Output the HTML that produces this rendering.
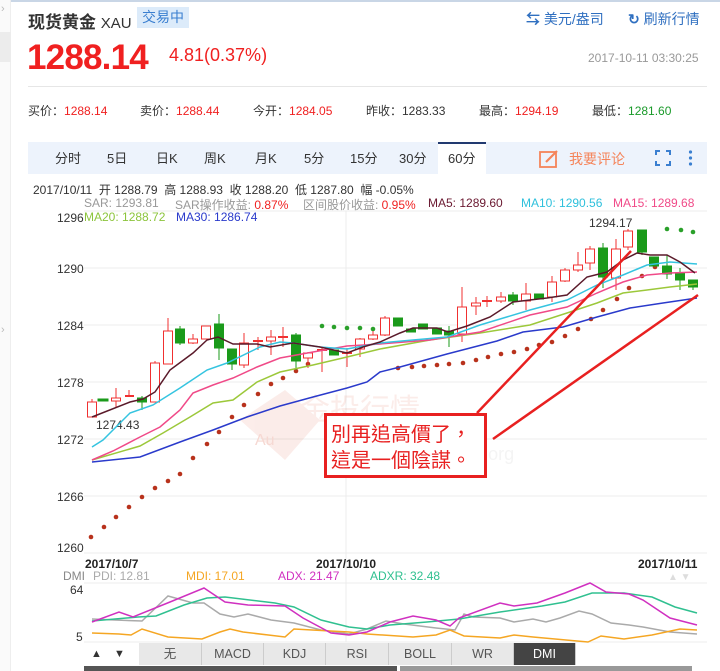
<!DOCTYPE html>
<html><head><meta charset="utf-8"><style>
*{margin:0;padding:0;box-sizing:border-box}
body{width:720px;height:671px;overflow:hidden;background:#fff;font-family:"Liberation Sans","Noto Sans CJK SC",sans-serif;position:relative;color:#333}
.a{position:absolute;white-space:nowrap}
.r{color:#f02020}.g{color:#1a9a2a}
.tab{position:absolute;top:142px;height:32px;line-height:34px;font-size:13px;color:#333}
.bt{position:absolute;top:643px;height:22px;line-height:22px;font-size:12.5px;color:#555;text-align:center;background:#e8e8e8;border-right:1px solid #ccc}
</style></head><body>
<div class="a" style="left:0;top:0;width:720px;height:2px;background:#c9d6e6"></div>
<div class="a" style="left:0;top:0;width:11px;height:671px;background:#fafafa;border-right:1px solid #eee"></div>
<div class="a" style="left:0;top:32px;width:11px;height:30px;background:#ececec"></div>
<div class="a" style="left:1px;top:3px;font-size:11px;color:#bbb">›</div>
<div class="a" style="left:1px;top:324px;font-size:11px;color:#bbb">›</div>

<div class="a" style="left:28px;top:8px;font-size:17px;font-weight:bold;color:#333">现货黄金 <span style="font-weight:normal;font-size:15px">XAU</span></div>
<div class="a" style="left:137px;top:7px;width:52px;height:21px;background:#dcebfa;color:#3a7fd0;font-size:14px;line-height:21px;text-align:center">交易中</div>
<div class="a" style="left:526px;top:9px;font-size:14px;color:#2f6fc0"><span style="font-weight:bold">⇆</span> 美元/盎司</div>
<div class="a" style="left:628px;top:9px;font-size:14px;color:#2f6fc0"><span style="font-weight:bold">↻</span> 刷新行情</div>
<div class="a r" style="left:27px;top:38px;font-size:35px;font-weight:bold;letter-spacing:-0.8px">1288.14</div>
<div class="a r" style="left:169px;top:45px;font-size:18px">4.81(0.37%)</div>
<div class="a" style="left:588px;top:51px;font-size:12px;color:#999">2017-10-11 03:30:25</div>
<div class="a" style="left:28px;top:86px;width:679px;height:1px;background:#e6e6e6"></div>
<div class="a" style="left:28px;top:102px;font-size:12px;color:#333">买价：<span class="r">1288.14</span></div>
<div class="a" style="left:140px;top:102px;font-size:12px;color:#333">卖价：<span class="r">1288.44</span></div>
<div class="a" style="left:253px;top:102px;font-size:12px;color:#333">今开：<span class="r">1284.05</span></div>
<div class="a" style="left:366px;top:102px;font-size:12px;color:#333">昨收：1283.33</div>
<div class="a" style="left:479px;top:102px;font-size:12px;color:#333">最高：<span class="r">1294.19</span></div>
<div class="a" style="left:592px;top:102px;font-size:12px;color:#333">最低：<span class="g">1281.60</span></div>

<div class="a" style="left:28px;top:142px;width:679px;height:32px;background:#edf3fc"></div>
<div class="a" style="left:438px;top:142px;width:48px;height:33px;background:#fff;border-top:2px solid #223a70"></div>
<div class="tab" style="left:55px">分时</div><div class="tab" style="left:107px">5日</div><div class="tab" style="left:156px">日K</div><div class="tab" style="left:204px">周K</div><div class="tab" style="left:255px">月K</div><div class="tab" style="left:304px">5分</div><div class="tab" style="left:350px">15分</div><div class="tab" style="left:399px">30分</div><div class="tab" style="left:448px">60分</div>
<svg class="a" style="left:539px;top:149px" width="22" height="20"><rect x="1" y="3" width="16" height="15" fill="none" stroke="#f5845a" stroke-width="1.8"/><path d="M7 13 L18 2" stroke="#f5845a" stroke-width="2.2"/></svg>
<div class="tab" style="left:569px;color:#f5845a;font-size:14px">我要评论</div>
<svg class="a" style="left:655px;top:150px" width="16" height="16" fill="none" stroke="#3a7fd0" stroke-width="2"><path d="M1 5V1H5M11 1H15V5M15 11V15H11M5 15H1V11"/></svg>
<svg class="a" style="left:688px;top:150px" width="5" height="16" fill="#3a7fd0"><circle cx="2.5" cy="2" r="1.6"/><circle cx="2.5" cy="8" r="1.6"/><circle cx="2.5" cy="14" r="1.6"/></svg>

<div class="a" style="left:33px;top:181px;font-size:12px;color:#333">2017/10/11&nbsp; 开 1288.79&nbsp; 高 1288.93&nbsp; 收 1288.20&nbsp; 低 1287.80&nbsp; 幅 -0.05%</div>
<div class="a" style="left:84px;top:196px;font-size:12px;color:#999">SAR: 1293.81</div>
<div class="a" style="left:175px;top:196px;font-size:12px;color:#999">SAR操作收益: <span class="r">0.87%</span></div>
<div class="a" style="left:303px;top:196px;font-size:12px;color:#999">区间股价收益: <span class="r">0.95%</span></div>
<div class="a" style="left:428px;top:196px;font-size:12px;color:#6a1830">MA5: 1289.60</div>
<div class="a" style="left:521px;top:196px;font-size:12px;color:#2ec0dc">MA10: 1290.56</div>
<div class="a" style="left:613px;top:196px;font-size:12px;color:#f04a88">MA15: 1289.68</div>

<svg class="a" style="left:0;top:0" width="720" height="671">
<g stroke="#ececec" stroke-width="1">
<line x1="84" y1="211" x2="707" y2="211"/><line x1="84" y1="268" x2="707" y2="268"/><line x1="84" y1="325" x2="707" y2="325"/><line x1="84" y1="382" x2="707" y2="382"/><line x1="84" y1="439" x2="707" y2="439"/><line x1="84" y1="496" x2="707" y2="496"/><line x1="84" y1="553" x2="707" y2="553"/>
<line x1="346" y1="211" x2="346" y2="642"/><line x1="84" y1="583" x2="707" y2="583"/><line x1="84" y1="642" x2="707" y2="642"/>
</g>
<g font-size="12" fill="#333" font-family="Liberation Sans,sans-serif">
<text x="57" y="222">1296</text><text x="57" y="273">1290</text><text x="57" y="330">1284</text><text x="57" y="387">1278</text><text x="57" y="444">1272</text><text x="57" y="501">1266</text><text x="57" y="552">1260</text>
<text x="96" y="429">1274.43</text><text x="589" y="227">1294.17</text>
</g>
<text x="84" y="221" font-size="12" fill="#8cc43c">MA20: 1288.72</text><text x="176" y="221" font-size="12" fill="#2a3acb">MA30: 1286.74</text>
<!-- watermark -->
<g opacity="0.1" fill="#e05030"><path d="M240 420 L285 390 L320 420 L285 460 Z"/><text x="300" y="420" font-size="30" font-family="Noto Sans CJK SC">金投行情</text><text x="380" y="460" font-size="18" fill="#999">quote.cngold.org</text></g>
<text x="255" y="445" font-size="16" fill="#f6d8d2">Au</text>
<!-- SAR dots -->
<g fill="#b8321c">
<circle cx="91" cy="537" r="2.3"/><circle cx="104" cy="527" r="2.3"/><circle cx="116" cy="517" r="2.3"/><circle cx="129" cy="507" r="2.3"/><circle cx="142" cy="497" r="2.3"/><circle cx="155" cy="488" r="2.3"/><circle cx="168" cy="481" r="2.3"/><circle cx="180" cy="474" r="2.3"/><circle cx="193" cy="458" r="2.3"/><circle cx="207" cy="444" r="2.3"/><circle cx="219" cy="432" r="2.3"/><circle cx="232" cy="417" r="2.3"/><circle cx="244" cy="405" r="2.3"/><circle cx="258" cy="394" r="2.3"/><circle cx="271" cy="384" r="2.3"/><circle cx="283" cy="378" r="2.3"/><circle cx="296" cy="371" r="2.3"/><circle cx="308" cy="364" r="2.3"/>
<circle cx="398" cy="368" r="2.3"/><circle cx="412" cy="367" r="2.3"/><circle cx="424" cy="366" r="2.3"/><circle cx="437" cy="365" r="2.3"/><circle cx="449" cy="364" r="2.3"/><circle cx="463" cy="363" r="2.3"/><circle cx="476" cy="360" r="2.3"/><circle cx="488" cy="357" r="2.3"/><circle cx="501" cy="354" r="2.3"/><circle cx="514" cy="352" r="2.3"/><circle cx="527" cy="349" r="2.3"/><circle cx="539" cy="345" r="2.3"/><circle cx="552" cy="342" r="2.3"/><circle cx="565" cy="336" r="2.3"/><circle cx="578" cy="329" r="2.3"/><circle cx="591" cy="319" r="2.3"/><circle cx="603" cy="310" r="2.3"/><circle cx="617" cy="299" r="2.3"/><circle cx="629" cy="288" r="2.3"/><circle cx="642" cy="276" r="2.3"/><circle cx="655" cy="267" r="2.3"/>
</g>
<g fill="#2aa02a"><circle cx="322" cy="326" r="2.3"/><circle cx="334" cy="327" r="2.3"/><circle cx="347" cy="328" r="2.3"/><circle cx="360" cy="328" r="2.3"/><circle cx="373" cy="329" r="2.3"/><circle cx="385" cy="330" r="2.3"/><circle cx="667" cy="229" r="2.3"/><circle cx="681" cy="230" r="2.3"/><circle cx="693" cy="232" r="2.3"/></g>
<!-- candles -->
<g stroke="#f03030" stroke-width="1" fill="#fff">
<line x1="92" y1="399" x2="92" y2="417"/><rect x="87.5" y="402" width="9" height="15"/>
<line x1="116" y1="388" x2="116" y2="408"/><rect x="111.5" y="398" width="9" height="3"/>
<line x1="129" y1="390" x2="129" y2="397"/><line x1="125" y1="396" x2="134" y2="396" stroke-width="2"/>
<line x1="155" y1="361" x2="155" y2="402"/><rect x="150.5" y="363" width="9" height="39"/>
<line x1="168" y1="318" x2="168" y2="364"/><rect x="163.5" y="331" width="9" height="33"/>
<line x1="193" y1="334" x2="193" y2="344"/><rect x="188.5" y="339" width="9" height="4"/>
<rect x="201.5" y="326" width="9" height="13"/>
<line x1="244" y1="333" x2="244" y2="368"/><rect x="239.5" y="343" width="9" height="22"/>
<line x1="258" y1="337" x2="258" y2="350"/><line x1="253" y1="341" x2="263" y2="341" stroke-width="2"/>
<line x1="271" y1="330" x2="271" y2="355"/><rect x="266.5" y="337" width="9" height="4"/>
<line x1="283" y1="327" x2="283" y2="347"/><line x1="278" y1="337" x2="288" y2="337" stroke-width="2"/>
<line x1="308" y1="352" x2="308" y2="368"/><rect x="303.5" y="353" width="9" height="5"/>
<line x1="322" y1="348" x2="322" y2="372"/><line x1="317" y1="350" x2="327" y2="350" stroke-width="2"/>
<line x1="347" y1="348" x2="347" y2="367"/><line x1="342" y1="353" x2="352" y2="353" stroke-width="2"/>
<line x1="360" y1="338" x2="360" y2="357"/><rect x="355.5" y="339" width="9" height="10"/>
<line x1="373" y1="331" x2="373" y2="340"/><rect x="368.5" y="335" width="9" height="4"/>
<line x1="385" y1="316" x2="385" y2="336"/><rect x="380.5" y="318" width="9" height="17"/>
<line x1="462" y1="287" x2="462" y2="342"/><rect x="457.5" y="307" width="9" height="27"/>
<line x1="476" y1="297" x2="476" y2="315"/><rect x="471.5" y="303" width="9" height="3"/>
<line x1="487" y1="296" x2="487" y2="307"/><line x1="482" y1="301" x2="492" y2="301" stroke-width="2"/>
<line x1="501" y1="292" x2="501" y2="303"/><rect x="496.5" y="297" width="9" height="4"/>
<line x1="526" y1="283" x2="526" y2="310"/><rect x="521.5" y="294" width="9" height="7"/>
<line x1="552" y1="276" x2="552" y2="302"/><rect x="547.5" y="282" width="9" height="15"/>
<line x1="565" y1="268" x2="565" y2="282"/><rect x="560.5" y="270" width="9" height="11"/>
<line x1="578" y1="252" x2="578" y2="272"/><rect x="573.5" y="265" width="9" height="5"/>
<line x1="590" y1="246" x2="590" y2="270"/><rect x="585.5" y="249" width="9" height="14"/>
<line x1="616" y1="239" x2="616" y2="290"/><rect x="611.5" y="249" width="9" height="29"/>
<line x1="628" y1="229" x2="628" y2="250"/><rect x="623.5" y="231" width="9" height="16"/>
</g>
<g stroke="#1a9a1a" stroke-width="1" fill="#1a9a1a">
<rect x="98" y="399" width="10" height="2"/>
<line x1="142" y1="396" x2="142" y2="410"/><rect x="137.5" y="398" width="9" height="4"/>
<line x1="180" y1="326" x2="180" y2="345"/><rect x="175.5" y="329" width="9" height="14"/>
<line x1="219" y1="314" x2="219" y2="360"/><rect x="214.5" y="324" width="9" height="24"/>
<line x1="232" y1="349" x2="232" y2="370"/><rect x="227.5" y="349" width="9" height="15"/>
<line x1="296" y1="333" x2="296" y2="370"/><rect x="291.5" y="335" width="9" height="26"/>
<rect x="329.5" y="350" width="9" height="5"/>
<rect x="393.5" y="318" width="9" height="8"/>
<rect x="406.5" y="329" width="9" height="3"/>
<rect x="418.5" y="324" width="9" height="5"/>
<rect x="432.5" y="328" width="9" height="6"/>
<line x1="449" y1="326" x2="449" y2="347"/><rect x="444.5" y="331" width="9" height="4"/>
<line x1="513" y1="292" x2="513" y2="305"/><rect x="508.5" y="295" width="9" height="6"/>
<rect x="534.5" y="294" width="9" height="5"/>
<line x1="603" y1="243" x2="603" y2="288"/><rect x="598.5" y="248" width="9" height="29"/>
<line x1="642" y1="230" x2="642" y2="255"/><rect x="637.5" y="230" width="9" height="22"/>
<rect x="649.5" y="257" width="9" height="9"/>
<line x1="667" y1="255" x2="667" y2="279"/><rect x="662.5" y="266" width="9" height="8"/>
<line x1="680" y1="268" x2="680" y2="290"/><rect x="675.5" y="273" width="9" height="7"/>
<line x1="693" y1="280" x2="693" y2="290"/><rect x="688.5" y="280" width="9" height="7"/>
</g>
<!-- MA lines -->
<g fill="none" stroke-width="1.5">
<polyline stroke="#2a3acb" points="92,462 140,457 180,442 213,430 247,417 280,406 313,397 347,388 367,382 380,372 400,367 447,354 497,341 523,332 563,327 597,317 630,308 663,303 697,298"/>
<polyline stroke="#9cc83a" points="92,460 140,446 163,433 190,417 213,403 233,400 257,382 280,372 313,365 347,357 380,349 430,340 480,333 530,325 567,313 597,303 623,293 647,290 670,287 697,284"/>
<polyline stroke="#f04a88" points="92,460 113,451 140,437 160,427 180,410 193,393 213,385 233,378 257,367 280,358 313,352 347,346 380,344 430,340 480,332 530,315 567,307 597,293 623,282 647,275 670,273 697,272"/>
<polyline stroke="#35c4e0" points="92,447 103,440 130,413 153,405 180,388 207,370 227,363 260,347 280,342 293,343 320,347 347,349 380,343 413,340 447,337 480,325 530,310 567,300 597,285 623,275 647,265 670,262 697,264"/>
<polyline stroke="#5a1a2a" points="92,417 130,402 143,399 155,392 170,370 193,353 207,340 218,337 233,344 257,344 270,347 293,343 320,347 347,353 363,347 380,342 400,333 413,328 437,328 448,332 467,326 490,317 513,302 547,298 567,295 587,277 607,272 623,260 637,253 650,255 667,255 680,262 695,273"/>
</g>
<!-- annotation -->
<g stroke="#e82020" stroke-width="2.5"><line x1="477" y1="413" x2="631" y2="251"/><line x1="493" y1="439" x2="698" y2="295"/></g>
<rect x="325.5" y="414.5" width="160" height="62" fill="#fff" stroke="#e82020" stroke-width="3"/>
<text x="331" y="441" font-size="20" fill="#e82020" font-family="Noto Sans CJK TC,sans-serif">別再追高價了，</text>
<text x="331" y="467" font-size="20" fill="#e82020" font-family="Noto Sans CJK TC,sans-serif">這是一個陰謀。</text>
<!-- dates -->
<g font-size="12" fill="#222" font-weight="bold"><text x="85" y="568">2017/10/7</text><text x="316" y="568">2017/10/10</text><text x="638" y="568">2017/10/11</text></g>
<g font-size="12"><text x="63" y="580" fill="#888">DMI</text><text x="93" y="580" fill="#aaa">PDI: 12.81</text><text x="186" y="580" fill="#f5a623">MDI: 17.01</text><text x="278" y="580" fill="#d030c0">ADX: 21.47</text><text x="370" y="580" fill="#30c090">ADXR: 32.48</text>
<text x="70" y="594" fill="#333">64</text><text x="76" y="641" fill="#333">5</text></g>
<text x="668" y="580" font-size="10" fill="#ddd">▲ ▼</text>
<g fill="none" stroke-width="1.5">
<polyline stroke="#aaa" points="92,619 115,620 142,621 168,596 193,603 204,603 220,614 234,617 248,614 271,620 294,623 321,630 349,634 367,629 386,621 404,624 436,628 455,630 464,614 473,617 500,618 514,622 533,619 546,622 560,618 579,611 592,614 611,623 629,625 643,627 670,632 697,634"/>
<polyline stroke="#f5a623" points="92,633 119,634 131,635 142,629 168,637 202,639 220,632 230,629 243,632 285,637 294,629 349,632 367,634 413,637 436,635 450,630 464,636 500,638 514,635 533,637 588,642 601,636 624,639 652,635 680,629 697,630"/>
<polyline stroke="#30c090" points="92,621 138,617 156,616 184,605 207,598 225,597 275,603 294,607 321,620 349,627 367,629 390,625 427,622 459,619 500,612 542,606 565,602 592,593 624,593 652,597 675,607 697,613"/>
<polyline stroke="#d030c0" points="92,622 119,612 133,617 170,602 204,588 225,602 248,605 285,606 303,618 331,633 349,635 367,632 390,622 413,616 436,620 450,626 459,618 500,603 514,606 537,603 565,593 590,583 606,592 629,594 643,600 670,618 697,625"/>
</g>
<!-- scrollbar -->
<rect x="84" y="666" width="313" height="5" fill="#555"/><rect x="400" y="666" width="292" height="5" fill="#999"/>
</svg>
<div class="a" style="left:87px;top:643px;width:19px;height:22px;line-height:22px;font-size:11px;text-align:center;background:#fff">▲</div>
<div class="a" style="left:110px;top:643px;width:19px;height:22px;line-height:22px;font-size:11px;text-align:center;background:#fff">▼</div>
<div class="bt" style="left:139px;width:63px">无</div>
<div class="bt" style="left:202px;width:62px">MACD</div>
<div class="bt" style="left:264px;width:62px">KDJ</div>
<div class="bt" style="left:326px;width:63px">RSI</div>
<div class="bt" style="left:389px;width:63px">BOLL</div>
<div class="bt" style="left:452px;width:62px">WR</div>
<div class="bt" style="left:514px;width:62px;background:#444;color:#fff">DMI</div>
</body></html>
